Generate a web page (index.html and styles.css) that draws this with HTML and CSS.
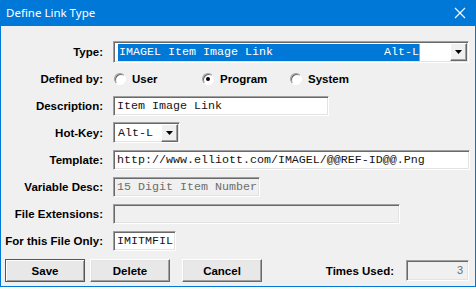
FILE: index.html
```html
<html>
<head>
    <title>Define Link Type</title>
    <meta charset="UTF-8">
    <link rel="stylesheet" href="styles.css">
</head>
<body>
    <div class="window">
        <div class="titlebar">
            <span class="title">Define Link Type</span>
            <svg class="close" width="12" height="12" viewBox="0 0 12 12">
                <path d="M1 1L11 11M11 1L1 11" stroke="#fff" stroke-width="1.1"/>
            </svg>
        </div>

        <div class="dialog">
            <div class="form-grid">
                <label>Type:</label>
                <div class="combo">
                    <div class="combo-value">
                        <span>IMAGEL Item Image Link</span>
                        <span>Alt-L</span>
                    </div>
                    <div class="drop-btn">
                        <svg width="7" height="4" viewBox="0 0 7 4"><path d="M0 0H7L3.5 4Z" fill="#000"/></svg>
                    </div>
                </div>

                <label>Defined by:</label>
                <div class="radio-group">
                    <span class="option"><span class="radio"></span>User</span>
                    <span class="option"><span class="radio checked"></span>Program</span>
                    <span class="option"><span class="radio"></span>System</span>
                </div>

                <label>Description:</label>
                <div class="field w-desc">Item Image Link</div>

                <label>Hot-Key:</label>
                <div class="combo hotkey">
                    <div class="combo-text">Alt-L</div>
                    <div class="drop-btn">
                        <svg width="7" height="4" viewBox="0 0 7 4"><path d="M0 0H7L3.5 4Z" fill="#000"/></svg>
                    </div>
                </div>

                <label>Template:</label>
                <div class="field w-template">http://www.elliott.com/IMAGEL/@@REF-ID@@.Png</div>

                <label>Variable Desc:</label>
                <div class="field disabled w-var">15 Digit Item Number</div>

                <label>File Extensions:</label>
                <div class="field disabled w-ext"></div>

                <label>For this File Only:</label>
                <div class="field w-file">IMITMFIL</div>
            </div>

            <div class="actions">
                <button class="btn default">Save</button>
                <button class="btn">Delete</button>
                <button class="btn cancel">Cancel</button>
                <span class="used-label">Times Used:</span>
                <div class="used-count">3</div>
            </div>
        </div>
    </div>
</body>
</html>
```

FILE: styles.css
```css
:root {
    --title-blue: #0078d7;
    --face: #f0f0f0;
    --shadow: #a0a0a0;
    --dark-shadow: #696969;
    --light: #e3e3e3;
}

body {
    margin: 0;
    font-family: 'Liberation Sans', Arial, sans-serif;
}

.window {
    width: 476px;
    height: 287px;
    box-sizing: border-box;
    background: var(--face);
    border: 1px solid var(--title-blue);
    border-top: none;
    display: flex;
    flex-direction: column;
}

.titlebar {
    height: 26px;
    margin: 0 -1px;
    background: var(--title-blue);
    display: flex;
    align-items: center;
    justify-content: space-between;
    padding: 0 10px 0 6px;
}

.title {
    color: white;
    font-family: 'Noto Sans', sans-serif;
    font-size: 11.5px;
    margin-top: -1px;
}

.close {
    margin-top: -1px;
}

.dialog {
    padding: 12px 6px 0 3px;
}

.form-grid {
    display: grid;
    grid-template-columns: 99px 1fr;
    grid-auto-rows: 27px;
    column-gap: 10px;
    align-items: center;
}

label,
.option,
.btn,
.used-label {
    font-weight: 700;
    font-size: 11.5px;
    color: #000;
}

label {
    text-align: right;
}

/* sunken 3d frame */
.field,
.combo,
.used-count {
    box-sizing: border-box;
    border: 1px solid;
    border-color: var(--shadow) white white var(--shadow);
    box-shadow: inset 1px 1px 0 var(--dark-shadow), inset -1px -1px 0 var(--light);
    background: white;
}

.field {
    height: 20px;
    padding: 0 3px;
    font-family: 'Liberation Mono', 'Courier New', monospace;
    font-size: 11.67px;
    line-height: 18px;
    color: #141414;
    white-space: nowrap;
    overflow: hidden;
}

.field.disabled {
    background: var(--face);
    color: #6d6d6d;
}

.w-desc { width: 216px; }
.w-template { width: 357px; }
.w-var { width: 147px; }
.w-ext { width: 287px; }
.w-file { width: 63px; }

.combo {
    height: 22px;
    width: 356px;
    display: flex;
    align-items: center;
    padding: 2px 1px 1px 4px;
}

.combo-value {
    width: 301px;
    height: 17px;
    background: var(--title-blue);
    color: white;
    display: flex;
    justify-content: space-between;
    align-items: center;
    border-right: 1px solid #f7941d;
    font-family: 'Liberation Mono', 'Courier New', monospace;
    font-size: 11.67px;
    white-space: pre;
}

.combo-value span:first-child {
    padding-left: 1px;
}

.drop-btn {
    margin-left: auto;
    width: 17px;
    height: 18px;
    box-sizing: border-box;
    background: var(--face);
    border: 1px solid;
    border-color: white var(--dark-shadow) var(--dark-shadow) white;
    box-shadow: inset -1px -1px 0 var(--shadow);
    display: flex;
    align-items: center;
    justify-content: center;
}

.combo.hotkey {
    width: 67px;
    height: 21px;
}

.combo-text {
    font-family: 'Liberation Mono', 'Courier New', monospace;
    font-size: 11.67px;
    color: #141414;
}

.radio-group {
    display: flex;
    padding-left: 1px;
}

.option {
    width: 88px;
    display: flex;
    align-items: center;
    gap: 6px;
}

.radio {
    width: 12px;
    height: 12px;
    box-sizing: border-box;
    border-radius: 50%;
    background: white;
    border: 1px solid;
    border-color: var(--shadow) white white var(--shadow);
    box-shadow: inset 1px 1px 0 var(--dark-shadow);
    display: flex;
    align-items: center;
    justify-content: center;
}

.radio.checked::after {
    content: '';
    width: 4px;
    height: 4px;
    border-radius: 50%;
    background: #000;
}

.actions {
    display: flex;
    align-items: center;
    margin-top: 5px;
    padding-left: 1px;
}

.btn {
    width: 80px;
    height: 23px;
    box-sizing: border-box;
    background: #e8e8e8;
    border: 1px solid;
    border-color: white var(--dark-shadow) var(--dark-shadow) white;
    box-shadow: inset -1px -1px 0 var(--shadow), inset 1px 1px 0 var(--light);
    font-family: 'Liberation Sans', Arial, sans-serif;
    padding: 0;
    margin-right: 5px;
}

.btn.default {
    border-color: #555;
    box-shadow: inset 1px 1px 0 white, inset -1px -1px 0 var(--shadow);
}

.btn.cancel {
    margin-left: 7px;
}

.used-label {
    margin-left: auto;
    margin-right: 12px;
}

.used-count {
    width: 63px;
    height: 21px;
    background: var(--face);
    color: #6d6d6d;
    font-size: 11px;
    text-align: right;
    line-height: 19px;
    padding-right: 5px;
}
```
